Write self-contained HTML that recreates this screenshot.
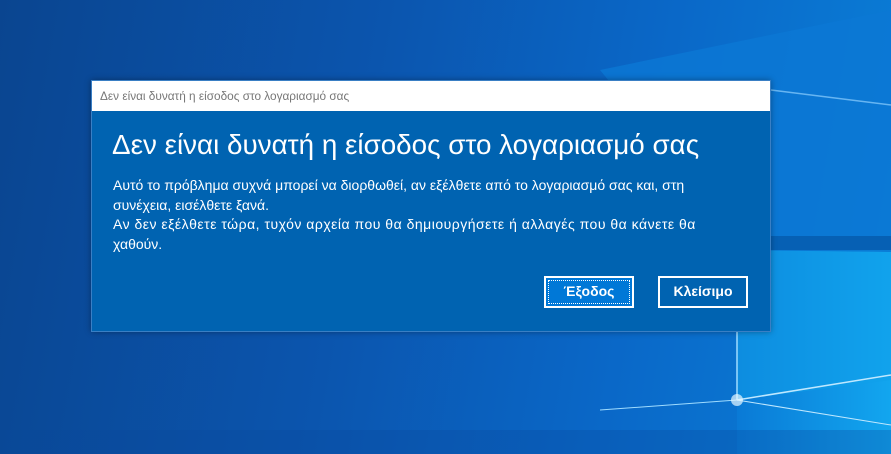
<!DOCTYPE html>
<html><head><meta charset="utf-8"><style>
body{margin:0;width:891px;height:454px;overflow:hidden;position:relative;font-family:"Segoe UI","Liberation Sans","DejaVu Sans",sans-serif;background:linear-gradient(100deg,#0a4590 0%,#0b55ae 40%,#0a68c8 70%,#0a80d8 100%);}
svg.bg{position:absolute;left:0;top:0}
.dlg{position:absolute;left:91px;top:80px;width:680px;height:252px;background:#0063b1;box-shadow:0 0 6px rgba(0,0,0,.35);border:1px solid #3a7fc4;box-sizing:border-box}
.tb{height:30px;background:#fff;color:#777;font-size:11.8px;line-height:31px;padding-left:8px}
h1{margin:0;position:absolute;left:20px;top:48px;font-weight:normal;color:#fff;font-size:27.8px;white-space:nowrap}
.txt{position:absolute;left:21px;top:95px;width:660px;color:#fff;font-size:14px;line-height:19.7px;white-space:nowrap}
.l2{letter-spacing:0.5px}
.btn{position:absolute;top:195px;width:90px;height:32px;box-sizing:border-box;border:2px solid #fff;color:#fff;font-weight:bold;font-size:14px;text-align:center;line-height:27px}
.b1{left:452px;background:#0078d7}
.b1 span{position:absolute;left:2px;top:2px;right:2px;bottom:2px;border:1px dotted #fff;}
.b2{left:566px}
</style></head><body>
<svg class="bg" width="891" height="454">
<defs><linearGradient id="g" x1="0" x2="1"><stop offset="0" stop-color="#0a7ad6"/><stop offset="1" stop-color="#12a6ef"/></linearGradient></defs>
<polygon points="600,70 891,10 891,236 737,238" fill="#0b78d4" opacity=".8"/>
<polygon points="737,250 891,252 891,454 737,454" fill="url(#g)"/>
<polygon points="737,250 891,252 891,380 737,400" fill="#0fa0ea" opacity=".5"/>
<rect x="737" y="236" width="154" height="14" fill="#0660b4"/>
<line x1="737" y1="250" x2="737" y2="400" stroke="#9fdcff" stroke-width="1.5"/>
<line x1="737" y1="400" x2="891" y2="375" stroke="#bfe8ff" stroke-width="1.5"/>
<line x1="600" y1="410" x2="737" y2="400" stroke="#9fdcff" stroke-width="1"/>
<line x1="737" y1="400" x2="891" y2="425" stroke="#bfe8ff" stroke-width="1"/>
<circle cx="737" cy="400" r="6" fill="#e8f8ff" opacity=".7"/>
<line x1="771" y1="90" x2="891" y2="105" stroke="#8fd0ff" stroke-width="1.5" opacity=".7"/>
<rect x="0" y="430" width="891" height="24" fill="#0a4a9a" opacity=".3"/>
</svg>
<div class="dlg">
<div class="tb">Δεν είναι δυνατή η είσοδος στο λογαριασμό σας</div>
<h1>Δεν είναι δυνατή η είσοδος στο λογαριασμό σας</h1>
<div class="txt">Αυτό το πρόβλημα συχνά μπορεί να διορθωθεί, αν εξέλθετε από το λογαριασμό σας και, στη<br>συνέχεια, εισέλθετε ξανά.<br><span class="l2">Αν δεν εξέλθετε τώρα, τυχόν αρχεία που θα δημιουργήσετε ή αλλαγές που θα κάνετε θα</span><br>χαθούν.</div>
<div class="btn b1"><span></span>Έξοδος</div>
<div class="btn b2">Κλείσιμο</div>
</div>
</body></html>
